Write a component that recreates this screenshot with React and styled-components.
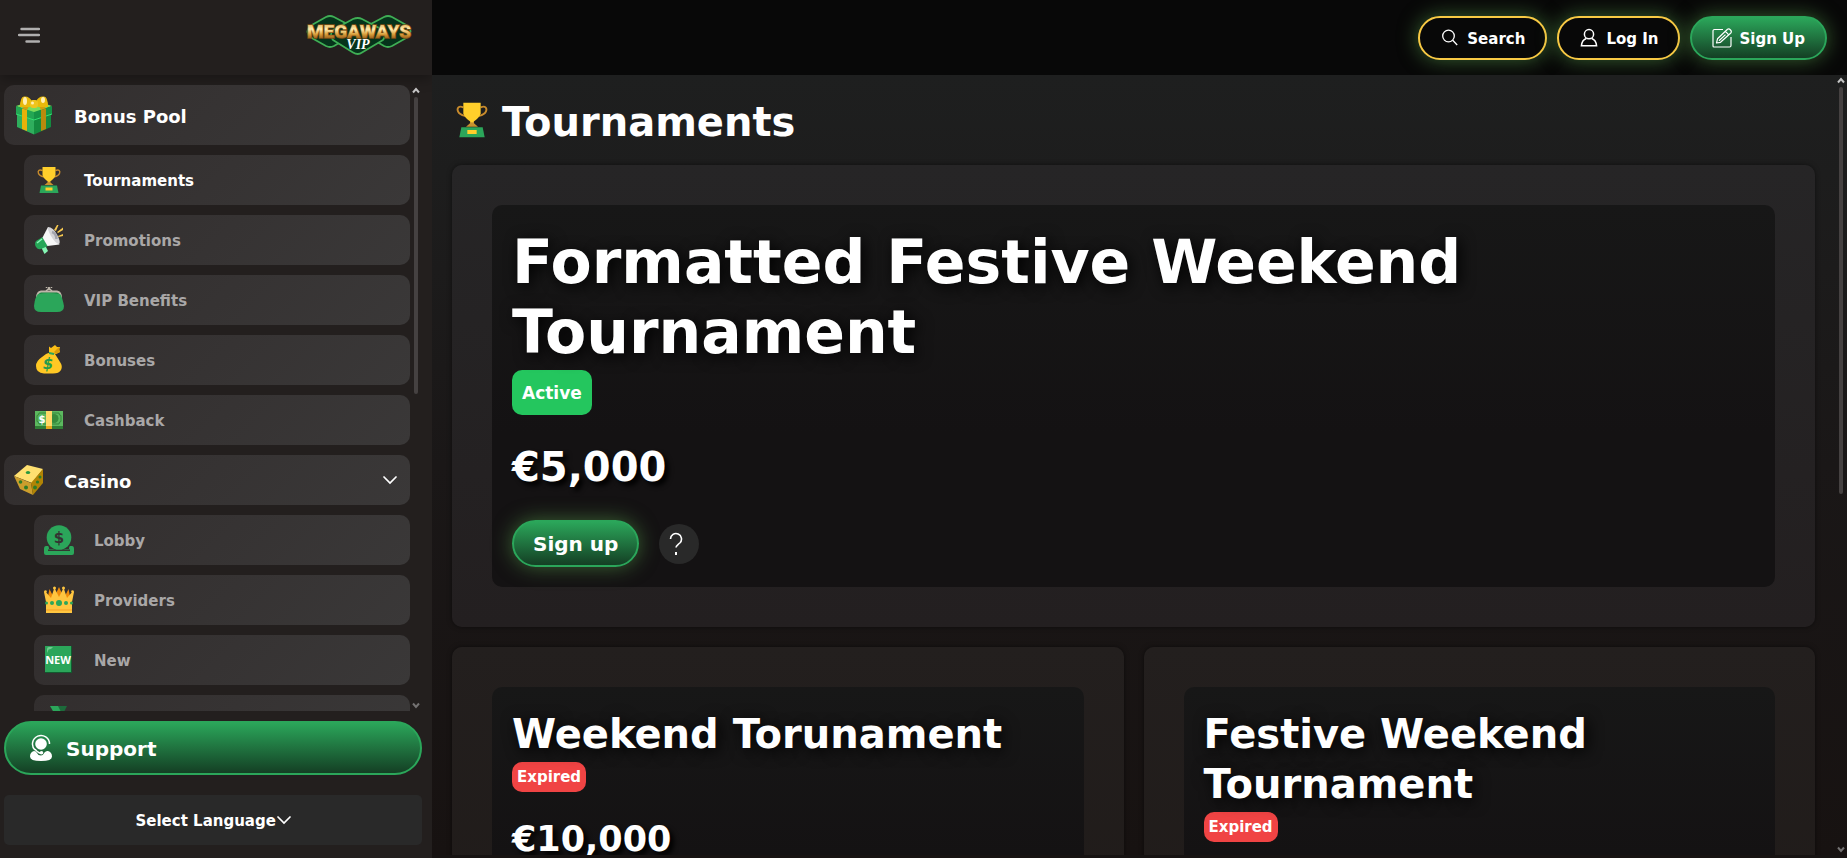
import styled, { createGlobalStyle } from 'styled-components';

export default function App() {
  return (
    <>
      <GlobalStyle />
      <Page>
        <Sidebar>
          <SidebarHeader>
            <IconButton aria-label="Toggle menu">
              <MenuIcon />
            </IconButton>
            <Logo />
          </SidebarHeader>
          <NavArea>
            <NavList>
              {navItems.map((item) => (
                <NavItem key={item.label} {...item} />
              ))}
            </NavList>
            <ScrollBar thumb={297} />
          </NavArea>
          <SupportButton>
            <SupportIcon />
            <Label>Support</Label>
          </SupportButton>
          <LanguageBox>
            <LanguageSelect aria-label="Language">
              <option>Select Language</option>
            </LanguageSelect>
            <ChevronIcon />
          </LanguageBox>
        </Sidebar>
        <Content>
          <TopBar>
            <TopButton>
              <SearchIcon />
              <Label>Search</Label>
            </TopButton>
            <TopButton>
              <UserIcon />
              <Label>Log In</Label>
            </TopButton>
            <TopButton $filled>
              <EditIcon />
              <Label>Sign Up</Label>
            </TopButton>
          </TopBar>
          <ScrollArea>
            <Main>
              <PageTitle>
                <TrophyIcon size={40} />
                <TitleText>Tournaments</TitleText>
              </PageTitle>
              <Cards>
                <Card $wide>
                  <CardBody>
                    <HeroTitle>Formatted Festive Weekend Tournament</HeroTitle>
                    <Badge $active>Active</Badge>
                    <Prize $large>€5,000</Prize>
                    <Actions>
                      <SignUpButton>
                        <Label>Sign up</Label>
                      </SignUpButton>
                      <HelpButton aria-label="Help">
                        <QuestionIcon />
                      </HelpButton>
                    </Actions>
                  </CardBody>
                </Card>
                <Card>
                  <CardBody>
                    <CardTitle>Weekend Torunament</CardTitle>
                    <Badge>Expired</Badge>
                    <Prize>€10,000</Prize>
                  </CardBody>
                </Card>
                <Card>
                  <CardBody>
                    <CardTitle>Festive Weekend Tournament</CardTitle>
                    <Badge>Expired</Badge>
                  </CardBody>
                </Card>
              </Cards>
            </Main>
            <ScrollBar thumb={407} />
          </ScrollArea>
        </Content>
      </Page>
    </>
  );
}

function NavItem({ label, icon: Icon, level, heading, big, chevron }) {
  return (
    <NavLink href="#" $level={level} $heading={heading} $big={big} $current={label === 'Tournaments'}>
      <Icon size={big ? 40 : 30} />
      <NavLabel>{label}</NavLabel>
      {chevron && <ChevronIcon />}
    </NavLink>
  );
}

function ScrollBar({ thumb }) {
  return (
    <ScrollTrack aria-hidden="true">
      <svg width="8" height="7" viewBox="0 0 8 7" fill="none" stroke="#c4c4c4" strokeWidth="2">
        <path d="M1 5.5 4 2l3 3.5" />
      </svg>
      <ScrollThumb style={{ height: thumb }} />
      <ScrollSpace />
      <svg width="8" height="7" viewBox="0 0 8 7" fill="none" stroke="#747272" strokeWidth="2">
        <path d="M1 1.5 4 5l3-3.500" />
      </svg>
    </ScrollTrack>
  );
}

function Logo() {
  return (
    <svg width="106" height="42" viewBox="0 0 106 42" role="img" aria-label="Megaways VIP">
      <defs>
        <linearGradient id="gold" x1="0" y1="0" x2="0" y2="1">
          <stop offset="0.1" stopColor="#d9a044" />
          <stop offset="0.4" stopColor="#ffeeb0" />
          <stop offset="0.62" stopColor="#d99f3c" />
          <stop offset="0.85" stopColor="#8a4f12" />
        </linearGradient>
      </defs>
      <g fill="#06331b" stroke="#3fae55" strokeWidth="1.8" strokeLinejoin="round">
        <path d="M4 12 20 3q4-2 8 0L45 12q4 5 0 10L28 32q-4 2-8 0L4 23q-5-5 0-11Z" />
        <path d="M61 12 78 3q4-2 8 0L102 12q5 5 0 11L86 32q-4 2-8 0L61 22q-4-5 0-10Z" />
        <path d="M27 16 47 5q5-2 9 0L77 16q4 5 0 10L56 38.500q-4 3-9 0L27 26q-4-5 0-10Z" />
      </g>
      <text
        x="53"
        y="24"
        textAnchor="middle"
        fontFamily="Roboto, sans-serif"
        fontWeight="900"
        fontSize="19"
        fill="url(#gold)"
        stroke="#7d4c14"
        strokeWidth="1.500"
        paintOrder="stroke"
      >
        MEGAWAYS
      </text>
      <text
        x="52"
        y="35"
        textAnchor="middle"
        fontFamily="'Liberation Serif', serif"
        fontStyle="italic"
        fontWeight="700"
        fontSize="14"
        fill="#fff"
      >
        VIP
      </text>
    </svg>
  );
}

function MenuIcon() {
  return (
    <svg width="22" height="18" viewBox="0 0 22 18" stroke="#b0afaf" strokeWidth="2.400" strokeLinecap="round">
      <path d="M3.500 3H21M1 9h20M8.500 15.500H21" />
    </svg>
  );
}

function ChevronIcon() {
  return (
    <svg width="14" height="14" viewBox="0 0 14 14" fill="none" stroke="#fff" strokeWidth="1.700" strokeLinecap="round">
      <path d="m1 4 6 6 6-6" />
    </svg>
  );
}

function SearchIcon() {
  return (
    <svg width="20" height="20" viewBox="0 0 20 20" fill="none" stroke="#fff" strokeWidth="1.300">
      <circle cx="8.500" cy="8" r="5.800" />
      <path d="m12.700 12.200 4.500 4.800" />
    </svg>
  );
}

function UserIcon() {
  return (
    <svg width="20" height="20" viewBox="0 0 20 20" fill="none" stroke="#fff" strokeWidth="1.500">
      <circle cx="10" cy="6.200" r="4.600" />
      <path d="M7.200 10.500C4.500 11.500 2.800 14 2.400 17.800h15.200C17.200 14 15.500 11.500 12.800 10.500" />
    </svg>
  );
}

function EditIcon() {
  return (
    <svg width="20" height="20" viewBox="0 0 20 20" fill="none" stroke="#fff" strokeWidth="1.200" strokeLinejoin="round">
      <path d="M11 1.500H2.500a1.500 1.500 0 0 0-1.500 1.500v15a1 1 0 0 0 1 1h15.500a1.500 1.500 0 0 0 1.500-1.500V9" />
      <path d="m4.500 15 1-4.200L15.500 1.200q1.500-.8 3 .8t.3 3L8.500 14.300Zm9-11.500 2.800 2.800M7 12.800l6.500-6.200" />
    </svg>
  );
}

function QuestionIcon() {
  return (
    <svg width="24" height="24" viewBox="0 0 24 24" fill="none" stroke="#fff" strokeWidth="1.600">
      <path d="M3.500 7a5.500 5.500 0 1 1 9.300 4C10.500 13 9 13.500 9 15.500" />
      <path d="M9 20v3" strokeWidth="2" />
    </svg>
  );
}

function SupportIcon() {
  return (
    <svg width="24" height="28" viewBox="0 0 24 28" fill="#fff">
      <circle cx="12" cy="10" r="5.800" />
      <path d="M20.500 10a8.500 8.500 0 1 0-14.500 6" fill="none" stroke="#fff" strokeWidth="1.500" />
      <path d="M5 17q-4 1-4 5.500Q1 27 12 27t11-4.500Q23 18 19 17q-2-.5-3.500 1.500Q14 21.500 12 21.500 9 21.500 8 19 7 17 5 17Z" />
      <path d="M6 15q2 3.500 6 4.500" fill="none" stroke="#fff" strokeWidth="1.500" />
      <circle cx="12.500" cy="18.800" r="1.800" />
    </svg>
  );
}

function GiftIcon({ size }) {
  return (
    <svg width={size} height={size} viewBox="0 0 40 40">
      <path d="M3 16 20 21v18.500L3 32Z" fill="#2fae5d" />
      <path d="m37 16-17 5v18.500L37 32Z" fill="#148a3f" />
      <path d="m2 11 18-6 18 6-18 7Z" fill="#7bdc5b" />
      <path d="m2 11 18 6v8L2 19Z" fill="#23a653" />
      <path d="m38 11-18 6v8l18-6Z" fill="#159346" />
      <path d="m2 19 18 6 18-6" fill="none" stroke="#31df70" strokeWidth="1" />
      <path d="m8 13.500 5 1.500v21L8 34Z" fill="#e7b20a" />
      <path d="m32 13.500-5 1.500v21l5-2Z" fill="#b88a0d" />
      <path d="m8 13 3-2 4 0-2 4Zm24 0-3-2-4 0 2 4Z" fill="#d69e0b" />
      <path d="M6 12Q6 2 10 1.500q6-.5 8 5.500l-2 5Zm28 0q0-10-4-10.500-6-.5-8 5.500l2 5Z" fill="#e8b90b" />
      <ellipse cx="11" cy="6" rx="2" ry="4" fill="#fff0b3" />
      <ellipse cx="29" cy="5" rx="2" ry="3" fill="#fff0b3" />
      <rect x="16" y="5" width="8" height="8" rx="3" fill="#efc41c" />
      <circle cx="18.500" cy="8" r="1.500" fill="#fff0b3" />
    </svg>
  );
}

function TrophyIcon({ size }) {
  return (
    <svg width={size} height={size} viewBox="0 0 30 30">
      <path d="M8.500 5.500C5 4 3.500 6 4.500 8.500S8 11.500 10 12M21.500 5.500c3.500-1.500 5 .5 4 3s-3.500 3-5.500 3.500" fill="none" stroke="#c88b2c" strokeWidth="1.400" />
      <path d="M13.500 14h3v3.500l3 2.500h-9l3-2.500Z" fill="#c8922f" />
      <path d="M8.500 2h13v8q-1 4-6.500 7-5.500-3-6.500-7Z" fill="#ffcf2b" />
      <path d="M7 20.500h16l1.500 7.500h-19Z" fill="#2ba65a" />
      <rect x="11.500" y="22.500" width="7" height="3" fill="#ffcf2b" />
    </svg>
  );
}

function MegaphoneIcon({ size }) {
  return (
    <svg width={size} height={size} viewBox="0 0 30 30">
      <path d="m7 22 4-2 3 6-3.500 3Z" fill="#84f6b4" />
      <path d="M8.500 12 2 16q-2 3 0 6 2 3 5 2l7-3Z" fill="#25a657" />
      <path d="m3 18 5-4" stroke="#8df7b8" strokeWidth="1.500" />
      <path d="m14 2-5.500 10.500 5 8.500 12-1.500Z" fill="#f6f6f6" />
      <path d="M14 2q5 0 9 7.500T25 19q-4-1-8-8T14 2Z" fill="#d5d5d8" />
      <path d="M18 7q4 1 4.500 7" fill="none" stroke="#a4a5ad" strokeWidth="2.500" />
      <path d="m20 5 3-5h1.500L22 6Zm3 2 6-4.500V5l-5 3Zm1 4 5-2v2l-4.500 1Z" fill="#f6c850" />
    </svg>
  );
}

function PurseIcon({ size }) {
  return (
    <svg width={size} height={size} viewBox="0 0 30 30">
      <path d="M3 13q0-6 4-6.500h16q4 .5 4 6.500" fill="#17803d" stroke="#bdb5a9" strokeWidth="2" />
      <path d="m12 6 4-3.500M18 6l-4-3.500M12.500 3v-1m5 1v-1" fill="none" stroke="#bdb5a9" strokeWidth="1.500" />
      <path d="M4 9q10-2 22 0 2 2 4 12 0 6-7 6H7q-7 0-7-6Q1 12 4 9Z" fill="#2ba65a" />
    </svg>
  );
}

function MoneyBagIcon({ size }) {
  return (
    <svg width={size} height={size} viewBox="0 0 30 30">
      <path d="M15 1.500 17 3l4-3 2 2h3l-1 3 1 2-4 2-7-1Z" fill="#fcbf17" />
      <path d="m20 7 5-5 1 5-4 2Z" fill="#db9c0a" />
      <path d="M12 9q5-3 9 0 2 3 5 8 3 4 1 8-2 3.500-8 3.500H10Q2 28 2 21q0-5 6-9Z" fill="#ffc824" />
      <path d="m15 8 5 1" stroke="#2ba65a" strokeWidth="2" />
      <text x="14" y="24" textAnchor="middle" fontFamily="'DejaVu Sans', sans-serif" fontStyle="italic" fontWeight="700" fontSize="15" fill="#239b4e">
        $
      </text>
    </svg>
  );
}

function CashIcon({ size }) {
  return (
    <svg width={size} height={size} viewBox="0 0 30 30">
      <path d="M1 6h28v18H1Z" fill="#307d36" />
      <path d="M1 6h28v15H1Z" fill="#5cb85f" />
      <path d="M5 8h20q0 2.500 2 2.500v6q-2 0-2 2.500H5q0-2.500-2-2.500v-6q2 0 2-2.500Z" fill="none" stroke="#35863a" />
      <circle cx="20" cy="13.500" r="4.500" fill="#378b3c" />
      <text x="8" y="17.500" textAnchor="middle" fontFamily="'DejaVu Sans', sans-serif" fontWeight="700" fontSize="10" fill="#fff">
        $
      </text>
      <path d="M12 6h6v15h-6Z" fill="#ffd966" />
      <path d="M12 21h6v3h-6Z" fill="#e5a91b" />
    </svg>
  );
}

function DiceIcon({ size }) {
  return (
    <svg width={size} height={size} viewBox="0 0 30 30">
      <path d="M0 11 13 0l16 4-11 14Z" fill="#ffe070" />
      <path d="m0 11 17 7 2 12-13-6Z" fill="#cc9e2d" />
      <path d="M29 4 17 18l2 12 10-12Z" fill="#b18405" />
      <ellipse cx="14" cy="7.500" rx="2.200" ry="1.500" fill="#28983f" />
      <g fill="#2f7c27">
        <circle cx="6.500" cy="17" r="1.800" />
        <circle cx="12" cy="22.500" r="2" />
        <circle cx="21" cy="22.500" r="1.900" />
        <circle cx="23.500" cy="17" r="1.600" />
        <circle cx="26" cy="12" r="1.500" />
      </g>
    </svg>
  );
}

function CoinIcon({ size }) {
  return (
    <svg width={size} height={size} viewBox="0 0 30 30">
      <path d="M2 21h2q1 0 1 3h20q0-3 1-3h2q2 0 2 3v4q0 2-2 2H2q-2 0-2-2v-4q0-3 2-3Z" fill="#2ba65a" />
      <path d="M4 25.200h22" stroke="#353232" strokeWidth="1.500" />
      <circle cx="15" cy="12.500" r="13" fill="#353232" />
      <circle cx="15" cy="12.500" r="12.300" fill="#2ba65a" />
      <text x="15" y="18" textAnchor="middle" fontFamily="'DejaVu Sans', sans-serif" fontWeight="700" fontSize="15" fill="#353232">
        $
      </text>
    </svg>
  );
}

function CrownIcon({ size }) {
  return (
    <svg width={size} height={size} viewBox="0 0 30 30">
      <path d="m3 16 2.500-12L10 13l5-11 5 11 4.500-9L27 16Z" fill="#ef8c0b" />
      <path d="M2 28V17L0 7l1-1 6 7 3-9h1l4 8 4-8h1l3 9 6-7 1 1-2 10v11Z" fill="#ffc640" />
      <g fill="#ffc640">
        <circle cx="1.500" cy="6.500" r="1.300" />
        <circle cx="10.500" cy="3" r="1.500" />
        <circle cx="19.500" cy="3" r="1.500" />
        <circle cx="28.500" cy="6.500" r="1.300" />
      </g>
      <path d="M2 25h26" stroke="#f69d25" />
      <g fill="#2ba65a">
        <circle cx="15" cy="18" r="3" />
        <circle cx="8" cy="18" r="2" />
        <circle cx="22" cy="18" r="2" />
        <circle cx="2.500" cy="18" r="1.500" />
        <circle cx="27.500" cy="18" r="1.500" />
      </g>
    </svg>
  );
}

function NewIcon({ size }) {
  return (
    <svg width={size} height={size} viewBox="0 0 30 30">
      <path d="M1 1h27v27H1Z" fill="#125a2f" />
      <path d="M1 1h26v26H1Z" fill="#2ba65a" />
      <path d="M3 8V4q0-2 2-2h4L7 4Q4 4 4 6Z" fill="#71c98f" />
      <text x="14" y="19" textAnchor="middle" fontFamily="'Open Sans', sans-serif" fontWeight="700" fontSize="11" fill="#fff">
        NEW
      </text>
    </svg>
  );
}

function RibbonIcon({ size }) {
  return (
    <svg width={size} height={size} viewBox="0 0 30 30">
      <path d="M14 1h9l-6 12h-6Z" fill="#1d6b3b" />
      <path d="M6 1h8l6 12h-7Z" fill="#2ba65a" />
      <circle cx="14.500" cy="20" r="8" fill="#ffc824" />
    </svg>
  );
}

const navItems = [
  { label: 'Bonus Pool', icon: GiftIcon, level: 0, heading: true, big: true },
  { label: 'Tournaments', icon: TrophyIcon, level: 20 },
  { label: 'Promotions', icon: MegaphoneIcon, level: 20 },
  { label: 'VIP Benefits', icon: PurseIcon, level: 20 },
  { label: 'Bonuses', icon: MoneyBagIcon, level: 20 },
  { label: 'Cashback', icon: CashIcon, level: 20 },
  { label: 'Casino', icon: DiceIcon, level: 0, heading: true, chevron: true },
  { label: 'Lobby', icon: CoinIcon, level: 30 },
  { label: 'Providers', icon: CrownIcon, level: 30 },
  { label: 'New', icon: NewIcon, level: 30 },
  { label: '', icon: RibbonIcon, level: 30 },
];

const GlobalStyle = createGlobalStyle`
  * {
    box-sizing: border-box;
  }

  body {
    margin: 0;
    background: #171312;
    color: #fff;
    font-family: Verdana, 'DejaVu Sans', sans-serif;
    font-weight: 700;
    font-size: 15px;
  }

  button,
  select {
    font: inherit;
    color: inherit;
    cursor: pointer;
  }

  svg {
    flex-shrink: 0;
  }
`;

const Page = styled.div`
  display: flex;
  height: 100vh;
  overflow: hidden;
`;

const Label = styled.span`
  padding-top: 2px;
`;

const Sidebar = styled.aside`
  display: flex;
  flex-direction: column;
  flex: 0 0 432px;
  padding: 0 10px 13px 4px;
  background: #231f1e;
`;

const SidebarHeader = styled.div`
  display: flex;
  align-items: center;
  justify-content: space-between;
  flex: 0 0 75px;
  margin: 0 -10px 0 -4px;
  padding: 0 20px 6px 18px;
  box-shadow: 0 4px 12px rgba(0, 0, 0, 0.3);
`;

const IconButton = styled.button`
  display: flex;
  padding: 0;
  border: 0;
  background: none;
`;

const NavArea = styled.div`
  display: flex;
  flex: 1;
  min-height: 0;
  margin: 10px 0;
`;

const NavList = styled.nav`
  display: flex;
  flex-direction: column;
  flex: 1;
  gap: 10px;
  overflow: hidden;
`;

const NavLink = styled.a`
  display: flex;
  align-items: center;
  flex-shrink: 0;
  gap: 20px;
  height: ${(props) => (props.$big ? '60px' : '50px')};
  margin-left: ${(props) => props.$level}px;
  padding: 0 13px 0 10px;
  border-radius: 10px;
  background: linear-gradient(135deg, #322e2e, #3a3838);
  color: ${(props) => (props.$heading || props.$current ? '#fff' : '#a9a7a7')};
  font-size: ${(props) => (props.$heading ? '18px' : '15px')};
  text-decoration: none;
`;

const NavLabel = styled(Label)`
  flex: 1;
`;

const ScrollTrack = styled.div`
  display: flex;
  flex-direction: column;
  align-items: center;
  flex: 0 0 12px;
  padding: 2px 0;
`;

const ScrollThumb = styled.div`
  width: 4px;
  margin-top: 3px;
  border-radius: 2px;
  background: #454141;
`;

const ScrollSpace = styled.div`
  flex: 1;
`;

const SupportButton = styled.button`
  display: flex;
  align-items: center;
  flex: 0 0 54px;
  gap: 13px;
  padding: 0 23px;
  border: 2px solid #2ba65a;
  border-radius: 27px;
  background: linear-gradient(#2ba65a, #143f24);
  font-size: 20px;
`;

const LanguageBox = styled.label`
  display: flex;
  align-items: center;
  justify-content: center;
  flex: 0 0 50px;
  margin-top: 20px;
  border-radius: 5px;
  background: #292929;
`;

const LanguageSelect = styled.select`
  appearance: none;
  padding: 2px 0 0;
  border: 0;
  background: none;
`;

const Content = styled.div`
  display: flex;
  flex-direction: column;
  flex: 1;
  min-width: 0;
  padding-bottom: 3px;
`;

const TopBar = styled.header`
  display: flex;
  align-items: center;
  justify-content: flex-end;
  flex: 0 0 75px;
  gap: 10px;
  padding: 1px 20px 0;
  background: #080808;
`;

const TopButton = styled.button`
  display: flex;
  align-items: center;
  gap: 7px;
  height: 44px;
  padding: 0 20px;
  border: 2px solid ${(props) => (props.$filled ? '#2ba65a' : '#f8c944')};
  border-radius: 22px;
  background: ${(props) => (props.$filled ? 'linear-gradient(#2ba65a, #143f24)' : '#080808')};
  box-shadow: 0 0 20px rgba(75, 135, 65, 0.7);
`;

const ScrollArea = styled.div`
  display: flex;
  flex: 1;
  min-height: 0;
  background: linear-gradient(#1e1f1f, #1a1717 50%, #171211);
`;

const Main = styled.main`
  flex: 1;
  min-width: 0;
  padding: 20px;
  overflow: hidden;
`;

const PageTitle = styled.h1`
  display: flex;
  align-items: center;
  gap: 10px;
  height: 50px;
  margin: 0 0 20px;
  font-size: 40px;
`;

const TitleText = styled.span`
  padding-top: 4px;
`;

const Cards = styled.div`
  display: grid;
  grid-template-columns: 1fr 1fr;
  gap: 20px;
`;

const Card = styled.section`
  grid-column: ${(props) => (props.$wide ? '1 / -1' : 'auto')};
  padding: 40px;
  border-radius: 10px;
  background: ${(props) => (props.$wide ? 'linear-gradient(#262526, #231f20)' : 'linear-gradient(#231f1e, #1f1a18)')};
  box-shadow: 0 0 5px rgba(0, 0, 0, 0.5);
`;

const CardBody = styled.div`
  min-height: 280px;
  padding: 20px;
  border-radius: 10px;
  background: linear-gradient(#171717, #141213 60%);
`;

const CardTitle = styled.h2`
  margin: 0 0 3px;
  padding-top: 2px;
  font-size: 40px;
  line-height: 50px;
  text-shadow: 3px 3px 15px #000;
`;

const HeroTitle = styled(CardTitle)`
  font-size: 60px;
  line-height: 70px;
`;

const Badge = styled.span`
  display: flex;
  align-items: center;
  width: fit-content;
  height: ${(props) => (props.$active ? '45px' : '30px')};
  padding: 0 ${(props) => (props.$active ? '10px' : '5px')};
  border-radius: 10px;
  background: ${(props) => (props.$active ? '#24c65e' : '#f04444')};
  font-size: ${(props) => (props.$active ? '17px' : '15px')};
`;

const Prize = styled.p`
  margin: 26px 0;
  font-size: ${(props) => (props.$large ? '40px' : '35px')};
  line-height: ${(props) => (props.$large ? '53px' : '42px')};
  text-shadow: 4px 4px 5px #000;
`;

const Actions = styled.div`
  display: flex;
  align-items: center;
  gap: 20px;
`;

const SignUpButton = styled.button`
  height: 47px;
  padding: 0 19px;
  border: 2px solid #2ba65a;
  border-radius: 24px;
  background: linear-gradient(#2ba65a, #143f24);
  box-shadow: 0 0 20px rgba(75, 135, 65, 0.7);
  font-size: 20px;
`;

const HelpButton = styled.button`
  display: flex;
  align-items: center;
  justify-content: center;
  width: 40px;
  height: 40px;
  padding: 0;
  border: 0;
  border-radius: 50%;
  background: #292929;
`;
